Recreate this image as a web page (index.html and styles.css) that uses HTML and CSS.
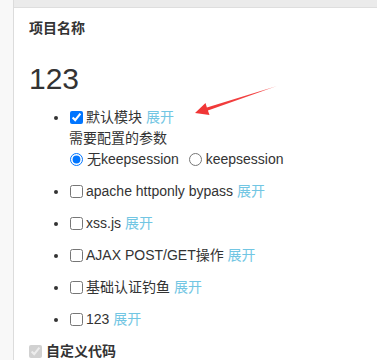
FILE: index.html
```html
<!DOCTYPE html>
<html lang="zh">
<head>
<meta charset="utf-8">
<link rel="stylesheet" href="styles.css">
</head>
<body>
<div class="frame">
  <div class="topbar"></div>
  <div class="panel">
    <div class="title">项目名称</div>
    <h1 class="proj">123</h1>
    <ul class="modules">
      <li>
        <label class="row"><input type="checkbox" class="cb" checked>默认模块</label> <a class="more">展开</a>
        <div class="params">需要配置的参数</div>
        <div class="radios">
          <label class="ropt"><input type="radio" name="ks" class="rd" checked>无keepsession</label>
          <label class="ropt"><input type="radio" name="ks" class="rd">keepsession</label>
        </div>
      </li>
      <li><label class="row"><input type="checkbox" class="cb">apache httponly bypass</label> <a class="more">展开</a></li>
      <li><label class="row"><input type="checkbox" class="cb">xss.js</label> <a class="more">展开</a></li>
      <li><label class="row"><input type="checkbox" class="cb">AJAX POST/GET操作</label> <a class="more">展开</a></li>
      <li><label class="row"><input type="checkbox" class="cb">基础认证钓鱼</label> <a class="more">展开</a></li>
      <li><label class="row"><input type="checkbox" class="cb">123</label> <a class="more">展开</a></li>
    </ul>
    <div class="custom"><input type="checkbox" class="cb cb-dis" checked disabled>自定义代码</div>
  </div>
  <svg class="arrow" width="377" height="360" viewBox="0 0 377 360">
    <defs>
      <linearGradient id="fade" x1="195" y1="113" x2="277" y2="86" gradientUnits="userSpaceOnUse">
        <stop offset="0" stop-color="#f03434"/>
        <stop offset="0.8" stop-color="#f24545"/>
        <stop offset="1" stop-color="#f69090"/>
      </linearGradient>
    </defs>
    <polygon points="195,113 205.5,103 206.9,107.4 277,86 207.9,110.4 209.5,115" fill="url(#fade)"/>
  </svg>
</div>
</body>
</html>
```

FILE: styles.css
```css
html, body {
  margin: 0;
  padding: 0;
  background: #f8f8f8;
}
body {
  font-family: Arial, "Liberation Sans", "Noto Sans CJK SC", sans-serif;
  color: #333;
  font-size: 14px;
}
.frame {
  position: relative;
  width: 377px;
  height: 360px;
  overflow: hidden;
  margin-left: 13px;
  border-left: 1px solid #dcdcdc;
  background: #fff;
}
.topbar {
  height: 7px;
  background: #ebebeb;
  border-bottom: 1px solid #dedede;
}
.panel {
  padding: 10px 0 0 15px;
}
.title {
  font-weight: bold;
  line-height: 20px;
  font-size: 14px;
}
.proj {
  margin: 23px 0 0 0;
  font-size: 30px;
  font-weight: normal;
  line-height: 36px;
}
.modules {
  margin: 10px 0 0 0;
  padding-left: 40px;
  line-height: 21px;
}
.modules li {
  margin-bottom: 11px;
}
.row {
  display: inline;
}
.cb {
  width: 13px;
  height: 13px;
  margin: 0 3px 0 1px;
  vertical-align: -2px;
}
.rd {
  width: 13px;
  height: 13px;
  margin: 0 4px 0 1px;
  vertical-align: -2px;
}
.ropt {
  margin-right: 5px;
}
.more {
  color: #72c6e3;
  cursor: pointer;
}
.custom {
  margin-top: 0;
  font-weight: bold;
  line-height: 21px;
}
.cb-dis {
  margin-left: 0;
  margin-right: 4px;
}
.arrow {
  position: absolute;
  left: -14px;
  top: 0;
  pointer-events: none;
}
```
